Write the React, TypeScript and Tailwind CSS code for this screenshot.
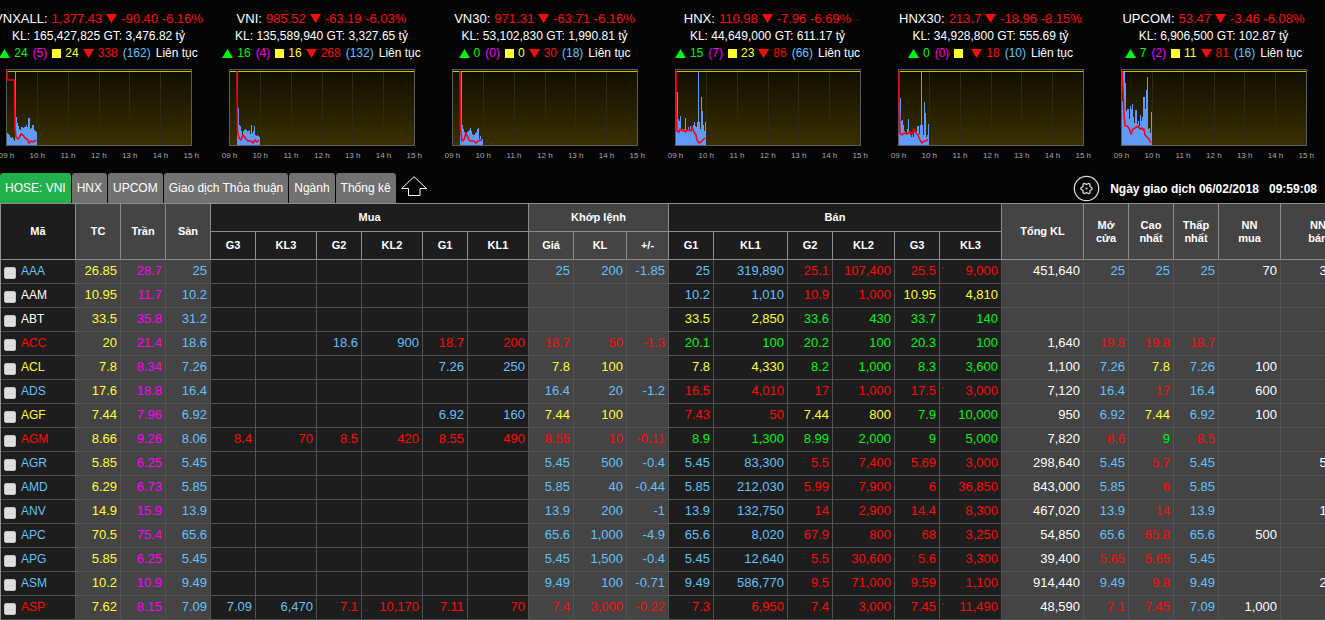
import React from "react";

type Point = [number, number];

type IndexInfo = {
  name: string;
  value: string;
  change: string;
  percent: string;
  volume: string;
  turnover: string;
  up: string;
  ceiling: string;
  flat: string;
  down: string;
  floor: string;
  firstBar: number;
  bars: number[];
  line: Point[];
};

const INDICES: IndexInfo[] = [
  {
    name: "VNXALL",
    value: "1,377.43",
    change: "-90.40",
    percent: "-6.16%",
    volume: "165,427,825",
    turnover: "3,476.82",
    up: "24",
    ceiling: "(5)",
    flat: "24",
    down: "338",
    floor: "(162)",
    firstBar: 1,
    bars: [64, 65, 66, 68, 69, 68, 70, 72, 2, 48, 54, 57, 60, 61, 58, 58, 59, 58, 58, 56, 58, 49, 49, 60, 59, 56, 56, 61, 62, 63],
    line: [[1, 2], [1, 11], [8.5, 11], [9, 60], [10, 68], [12, 70], [13, 69], [15, 65], [17, 66], [19, 69], [22, 71], [23, 74], [25, 72], [27, 73], [30, 71]],
  },
  {
    name: "VNI",
    value: "985.52",
    change: "-63.19",
    percent: "-6.03%",
    volume: "135,589,940",
    turnover: "3,327.65",
    up: "16",
    ceiling: "(4)",
    flat: "16",
    down: "268",
    floor: "(132)",
    firstBar: 8,
    bars: [2, 39, 56, 57, 62, 66, 62, 61, 60, 61, 62, 62, 61, 65, 56, 64, 62, 57, 66, 67, 66, 67, 68],
    line: [[8, 2], [8.5, 62], [10, 69], [12, 71], [14, 66], [15, 67], [17, 70], [19, 72], [22, 72], [24, 74], [26, 71], [28, 73], [30, 71]],
  },
  {
    name: "VN30",
    value: "971.31",
    change: "-63.71",
    percent: "-6.16%",
    volume: "53,102,830",
    turnover: "1,990.81",
    up: "0",
    ceiling: "(0)",
    flat: "0",
    down: "30",
    floor: "(18)",
    firstBar: 8,
    bars: [45, 2, 56, 60, 63, 66, 66, 63, 62, 61, 59, 62, 65, 66, 66, 64, 63, 60, 59, 70, 67, 71, 70],
    line: [[8, 2], [8.5, 60], [10, 72], [12, 71], [14, 64], [15, 66], [17, 71], [19, 72], [22, 72], [24, 74], [26, 72], [30, 71]],
  },
  {
    name: "HNX",
    value: "110.98",
    change: "-7.96",
    percent: "-6.69%",
    volume: "44,649,000",
    turnover: "611.17",
    up: "15",
    ceiling: "(7)",
    flat: "23",
    down: "86",
    floor: "(66)",
    firstBar: 1,
    bars: [40, 23, 50, 52, 47, 60, 60, 62, 60, 49, 63, 62, 58, 62, 57, 60, 61, 56, 53, 57, 58, 53, 2, 53, 60, 28, 42, 56, 62, 53],
    line: [[1, 2], [1, 30], [2, 62], [4, 63], [5, 60], [7, 62], [9, 61], [10, 63], [13, 61], [16, 62], [17, 58], [19, 63], [21, 66], [22, 71], [24, 74], [26, 73], [28, 71], [30, 69]],
  },
  {
    name: "HNX30",
    value: "213.7",
    change: "-18.96",
    percent: "-8.15%",
    volume: "34,928,800",
    turnover: "555.69",
    up: "0",
    ceiling: "(0)",
    flat: "",
    down: "18",
    floor: "(10)",
    firstBar: 1,
    bars: [40, 29, 52, 51, 56, 62, 63, 65, 60, 50, 64, 66, 68, 65, 68, 63, 64, 63, 57, 57, 65, 56, 2, 56, 66, 33, 44, 68, 66, 55],
    line: [[1, 2], [1, 30], [2, 64], [4, 66], [6, 64], [9, 65], [12, 63], [14, 65], [16, 60], [18, 64], [20, 66], [22, 71], [24, 74], [26, 72], [28, 72], [30, 70]],
  },
  {
    name: "UPCOM",
    value: "53.47",
    change: "-3.46",
    percent: "-6.08%",
    volume: "6,906,500",
    turnover: "102.87",
    up: "7",
    ceiling: "(2)",
    flat: "11",
    down: "81",
    floor: "(16)",
    firstBar: 1,
    bars: [32, 2, 3, 14, 42, 40, 40, 50, 37, 40, 35, 48, 54, 41, 41, 55, 52, 57, 46, 52, 48, 28, 28, 40, 21, 8, 60, 59, 64, 43],
    line: [[1, 2], [2, 20], [3, 44], [4, 57], [6, 57], [8, 59], [10, 65], [12, 60], [14, 59], [17, 57], [19, 60], [21, 59], [22, 61], [23, 60], [24, 66], [26, 68], [28, 70], [30, 74]],
  },
];

const HOURS = ["09 h", "10 h", "11 h", "12 h", "13 h", "14 h", "15 h"];

const TABS = ["HOSE: VNI", "HNX", "UPCOM", "Giao dịch Thỏa thuận", "Ngành", "Thống kê"];

const TONES: Record<string, string> = {
  b: "text-[#62c2fb]",
  r: "text-[#ff0a0a]",
  y: "text-[#ffff30]",
  g: "text-[#00f510]",
  m: "text-[#ff00ff]",
  w: "text-white",
};

/* Each cell is "<tone><value>"; "-" leaves the cell empty. */
const ROWS: string[] = [
  "bAAA y26.85 m28.7 b25 - - - - - - b25 b200 b-1.85 b25 b319,890 r25.1 r107,400 r25.5 r9,000 w451,640 b25 b25 b25 w70 w3,000",
  "wAAM y10.95 m11.7 b10.2 - - - - - - - - - b10.2 b1,010 r10.9 r1,000 y10.95 y4,810 - - - - - -",
  "wABT y33.5 m35.8 b31.2 - - - - - - - - - y33.5 y2,850 g33.6 g430 g33.7 g140 - - - - - -",
  "rACC y20 m21.4 b18.6 - - b18.6 b900 r18.7 r200 r18.7 r50 r-1.3 g20.1 g100 g20.2 g100 g20.3 g100 w1,640 r19.8 r19.8 r18.7 - -",
  "yACL y7.8 m8.34 b7.26 - - - - b7.26 b250 y7.8 y100 - y7.8 y4,330 g8.2 g1,000 g8.3 g3,600 w1,100 b7.26 y7.8 b7.26 w100 -",
  "bADS y17.6 m18.8 b16.4 - - - - - - b16.4 b20 b-1.2 r16.5 r4,010 r17 r1,000 r17.5 r3,000 w7,120 b16.4 r17 b16.4 w600 -",
  "yAGF y7.44 m7.96 b6.92 - - - - b6.92 b160 y7.44 y100 - r7.43 r50 y7.44 y800 g7.9 g10,000 w950 b6.92 y7.44 b6.92 w100 -",
  "rAGM y8.66 m9.26 b8.06 r8.4 r70 r8.5 r420 r8.55 r490 r8.55 r10 r-0.11 g8.9 g1,300 g8.99 g2,000 g9 g5,000 w7,820 r8.6 g9 r8.5 - -",
  "bAGR y5.85 m6.25 b5.45 - - - - - - b5.45 b500 b-0.4 b5.45 b83,300 r5.5 r7,400 r5.69 r3,000 w298,640 b5.45 r5.7 b5.45 - w5,000",
  "bAMD y6.29 m6.73 b5.85 - - - - - - b5.85 b40 b-0.44 b5.85 b212,030 r5.99 r7,900 r6 r36,850 w843,000 b5.85 r6 b5.85 - -",
  "bANV y14.9 m15.9 b13.9 - - - - - - b13.9 b200 b-1 b13.9 b132,750 r14 r2,900 r14.4 r8,300 w467,020 b13.9 r14 b13.9 - w1,000",
  "bAPC y70.5 m75.4 b65.6 - - - - - - b65.6 b1,000 b-4.9 b65.6 b8,020 r67.9 r800 r68 r3,250 w54,850 b65.6 r65.8 b65.6 w500 -",
  "bAPG y5.85 m6.25 b5.45 - - - - - - b5.45 b1,500 b-0.4 b5.45 b12,640 r5.5 r30,600 r5.6 r3,300 w39,400 r5.65 r5.65 b5.45 - -",
  "bASM y10.2 m10.9 b9.49 - - - - - - b9.49 b100 b-0.71 b9.49 b586,770 r9.5 r71,000 r9.59 r1,100 w914,440 b9.49 r9.8 b9.49 - w2,000",
  "rASP y7.62 m8.15 b7.09 b7.09 b6,470 r7.1 r10,170 r7.11 r70 r7.4 r3,000 r-0.22 r7.3 r6,950 r7.4 r3,000 r7.45 r11,490 w48,590 r7.1 r7.45 b7.09 w1,000 -",
];

const COLUMNS = [
  "w-[75px]",
  "w-[45px]",
  "w-[45px]",
  "w-[45px]",
  "w-[45px]",
  "w-[61px]",
  "w-[45px]",
  "w-[61px]",
  "w-[45px]",
  "w-[61px]",
  "w-[45px]",
  "w-[53px]",
  "w-[42px]",
  "w-[45px]",
  "w-[74px]",
  "w-[45px]",
  "w-[62px]",
  "w-[45px]",
  "w-[62px]",
  "w-[82px]",
  "w-[45px]",
  "w-[45px]",
  "w-[45px]",
  "w-[62px]",
  "w-[75px]",
];

const isLightColumn = (i: number) => (i >= 1 && i <= 3) || (i >= 10 && i <= 12) || i >= 19;

/* Six-lobed cog outline centred on 13.5, 13.5. */
const COG =
  "M" +
  Array.from({ length: 48 }, (_, i) => {
    const angle = (i / 48) * Math.PI * 2;
    const radius = 4.9 + 0.8 * Math.cos(angle * 6);
    return `${(13.5 + radius * Math.cos(angle)).toFixed(2)} ${(13.5 + radius * Math.sin(angle)).toFixed(2)}`;
  }).join("L") +
  "z";

function Up() {
  return (
    <svg width="11" height="9" viewBox="0 0 11 9" aria-hidden="true">
      <path d="M5.5 0 11 9H0z" fill="#00f510" />
    </svg>
  );
}

function Down() {
  return (
    <svg width="11" height="9" viewBox="0 0 11 9" aria-hidden="true">
      <path d="M0 0h11L5.5 9z" fill="#ff0a0a" />
    </svg>
  );
}

function Chart({ index, id }: { index: IndexInfo; id: string }) {
  const { firstBar, bars, line } = index;
  const area =
    `M${firstBar} 76` + bars.map((y, i) => `V${y}H${firstBar + i + 1}`).join("") + "V76z";
  return (
    <svg
      className="mt-[7px] overflow-visible"
      width="186"
      height="96"
      viewBox="0 0 186 96"
      role="img"
      aria-label={index.name}
    >
      <defs>
        <linearGradient id={id} x1="0" y1="0" x2="0" y2="1">
          <stop offset="0" stopColor="#100e00" />
          <stop offset="1" stopColor="#3a3000" />
        </linearGradient>
      </defs>
      <rect x="0.5" y="0.5" width="185" height="76" fill={`url(#${id})`} stroke="#5c5c5c" />
      {[31, 62, 93, 123, 154].map((x) => (
        <path key={x} d={`M${x + 0.5} 1V76`} stroke="#2e2a18" />
      ))}
      <path d={area} fill="#5f9bfa" />
      <path d="M1 2.5H185" stroke="#cfc400" />
      {firstBar > 1 && <path d="M1 2.5H8" stroke="#7dff1e" />}
      <path
        d={"M" + line.map(([x, y]) => `${x} ${y}`).join("L")}
        fill="none"
        stroke="#ff0011"
        strokeWidth="1.6"
        strokeLinejoin="round"
      />
      {HOURS.map((h, i) => (
        <text
          key={h}
          x={0.5 + i * 30.8}
          y="89"
          textAnchor="middle"
          fontSize="8"
          fill="#a8a8a8"
        >
          {h}
        </text>
      ))}
    </svg>
  );
}

function IndexPanel({ index, id }: { index: IndexInfo; id: string }) {
  return (
    <section className="flex w-[223px] shrink-0 flex-col items-center text-xs leading-[17px] whitespace-nowrap">
      <h2 className="mb-px flex items-center gap-1 text-[13px] leading-[17px] text-[#ff0a0a]">
        <span className="text-white">{index.name}:</span>
        <span>{index.value}</span>
        <Down />
        <span>
          {index.change} {index.percent}
        </span>
      </h2>
      <p>
        KL: {index.volume} GT: {index.turnover} tỷ
      </p>
      <p className="flex items-center gap-1">
        <Up />
        <span className="text-[#00f510]">{index.up}</span>
        <span className="px-px text-[#ff00ff]">{index.ceiling}</span>
        <span className="size-[9px] bg-[#ffff30]" />
        <span className="text-[#ffff30]">{index.flat}</span>
        <Down />
        <span className="text-[#ff0a0a]">{index.down}</span>
        <span className="px-px text-[#62c2fb]">{index.floor}</span>
        <span>Liên tục</span>
      </p>
      <Chart index={index} id={id} />
    </section>
  );
}

function Head({
  children,
  light,
  span,
  tall,
}: {
  children: React.ReactNode;
  light?: boolean;
  span?: number;
  tall?: boolean;
}) {
  return (
    <th
      scope={span ? "colgroup" : "col"}
      colSpan={span}
      rowSpan={tall ? 2 : undefined}
      className={`h-7 border-r border-b border-[#8c8c8c] p-0 text-center align-middle text-[11px] leading-[13px] font-bold ${
        light ? "bg-[#444444]" : "bg-[#1d1d1d]"
      }`}
    >
      {children}
    </th>
  );
}

function Row({ data }: { data: string }) {
  const [symbol, ...cells] = data.split(" ");
  const name = symbol.slice(1);
  return (
    <tr className="h-6">
      <th scope="row" className="border-r border-b border-[#505050] bg-[#1d1d1d] p-0 pb-px pl-[3px] font-normal">
        <label
          htmlFor={`pick-${name}`}
          className={`flex items-end gap-[5px] text-xs leading-4 ${TONES[symbol[0]]}`}
        >
          <input
            id={`pick-${name}`}
            type="checkbox"
            className="size-3 appearance-none rounded-[2px] border border-[#c4c4c4] bg-[#dedede] checked:bg-[#4a90e2]"
          />
          {name}
        </label>
      </th>
      {cells.map((cell, i) => (
        <td
          key={i}
          className={`border-r border-b p-0 pr-[3px] pb-px text-right text-[13px] leading-4 ${
            isLightColumn(i + 1) ? "border-[#525252] bg-[#444444]" : "border-[#505050] bg-[#1d1d1d]"
          } ${cell === "-" ? "" : TONES[cell[0]]}`}
        >
          {cell === "-" ? "" : cell.slice(1)}
        </td>
      ))}
    </tr>
  );
}

export default function App() {
  return (
    <main className="min-h-screen overflow-hidden bg-[#050505] font-['Liberation_Sans',Arial,sans-serif] text-white">
      <div className="-ml-[13px] flex pt-2.5">
        {INDICES.map((index, i) => (
          <IndexPanel key={index.name} index={index} id={`fill-${i}`} />
        ))}
      </div>

      <div className="mt-2 flex h-[30px] items-stretch justify-between">
        <nav className="flex gap-px">
          {TABS.map((tab, i) => (
            <button
              key={tab}
              type="button"
              className={`rounded-t-[3px] px-[5px] text-xs whitespace-nowrap ${
                i === 0 ? "bg-[#22b04c]" : "bg-[#717171]"
              }`}
            >
              {tab}
            </button>
          ))}
          <button type="button" aria-label="Thu gọn" className="ml-1 flex items-start pt-[3px]">
            <svg width="27" height="21" viewBox="0 0 27 21" fill="none" stroke="#ffffff">
              <path d="M13 0.7 25.500 12.500H19V19.500H7.500V12.500H0.700z" />
            </svg>
          </button>
        </nav>
        <div className="flex items-center gap-[10px] pr-2 text-xs font-bold whitespace-nowrap">
          <button type="button" aria-label="Cài đặt">
            <svg width="27" height="27" viewBox="0 0 27 27" fill="none" stroke="#d8d8d8">
              <circle cx="13.5" cy="13.5" r="12.2" strokeWidth="1.3" />
              <path d={COG} strokeWidth="1.3" strokeLinejoin="round" />
              <circle cx="13.5" cy="13.5" r="1.1" fill="#d8d8d8" stroke="none" />
            </svg>
          </button>
          <span className="pt-0.5">Ngày giao dịch 06/02/2018</span>
          <time className="pt-0.5">09:59:08</time>
        </div>
      </div>

      <table className="w-max table-fixed border-separate border-spacing-0 border-t border-l border-[#8c8c8c]">
        <colgroup>
          {COLUMNS.map((width, i) => (
            <col key={i} className={width} />
          ))}
        </colgroup>
        <thead>
          <tr>
            <Head tall>Mã</Head>
            <Head tall light>TC</Head>
            <Head tall light>Trần</Head>
            <Head tall light>Sàn</Head>
            <Head span={6}>Mua</Head>
            <Head span={3} light>Khớp lệnh</Head>
            <Head span={6}>Bán</Head>
            <Head tall light>Tổng KL</Head>
            <Head tall light>Mở<br />cửa</Head>
            <Head tall light>Cao<br />nhất</Head>
            <Head tall light>Thấp<br />nhất</Head>
            <Head tall light>NN<br />mua</Head>
            <Head tall light>NN<br />bán</Head>
          </tr>
          <tr>
            {["G3", "KL3", "G2", "KL2", "G1", "KL1"].map((t) => (
              <Head key={t}>{t}</Head>
            ))}
            {["Giá", "KL", "+/-"].map((t) => (
              <Head key={t} light>{t}</Head>
            ))}
            {["G1", "KL1", "G2", "KL2", "G3", "KL3"].map((t) => (
              <Head key={t}>{t}</Head>
            ))}
          </tr>
        </thead>
        <tbody>
          {ROWS.map((row) => (
            <Row key={row} data={row} />
          ))}
        </tbody>
      </table>
    </main>
  );
}
